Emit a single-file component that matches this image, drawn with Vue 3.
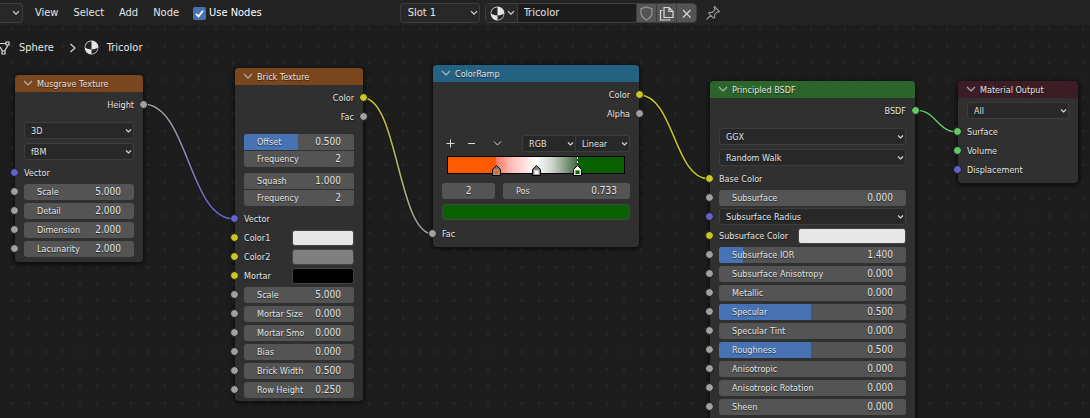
<script setup>
import { ref } from 'vue'

const colors = { y: '#c7c729', g: '#a1a1a1', p: '#6363c7', s: '#63c763' }
const useNodes = ref(true)
const material = ref('Tricolor')

const out = (label, socket) => ({ kind: 'out', label, socket })
const plain = (label, socket) => ({ kind: 'plain', label, socket })
const num = (label, value, fill = 0, socket = 'g') => ({ kind: 'num', label, value, fill, socket })
const color = (label, swatch) => ({ kind: 'color', label, swatch, socket: 'y' })
const pair = (a, b) => ({ kind: 'pair', fields: [a, b] })

const nodes = [
  { id: 'musgrave', title: 'Musgrave Texture', rows: [
    out('Height', 'g'), { kind: 'menus', label: 'Musgrave', options: ['3D', 'fBM'] }, plain('Vector', 'p'),
    num('Scale', '5.000'), num('Detail', '2.000'), num('Dimension', '2.000'), num('Lacunarity', '2.000') ] },
  { id: 'brick', title: 'Brick Texture', rows: [
    out('Color', 'y'), out('Fac', 'g'),
    pair(num('Offset', '0.500', 49), num('Frequency', '2')),
    pair(num('Squash', '1.000'), num('Frequency', '2')),
    plain('Vector', 'p'), color('Color1', '#e7e7e7'), color('Color2', '#7f7f7f'), color('Mortar', '#000000'),
    num('Scale', '5.000'), num('Mortar Size', '0.000'), num('Mortar Smo', '0.000'),
    num('Bias', '0.000'), num('Brick Width', '0.500'), num('Row Height', '0.250') ] },
  { id: 'ramp', title: 'ColorRamp', rows: [
    out('Color', 'y'), out('Alpha', 'g'), { kind: 'ramp' }, plain('Fac', 'g') ] },
  { id: 'principled', title: 'Principled BSDF', rows: [
    out('BSDF', 's'), { kind: 'menus', label: 'BSDF', options: ['GGX', 'Random Walk'] }, plain('Base Color', 'y'),
    num('Subsurface', '0.000'), { kind: 'vector', label: 'Subsurface Radius', socket: 'p' },
    color('Subsurface Color', '#e7e7e7'), num('Subsurface IOR', '1.400', 13), num('Subsurface Anisotropy', '0.000'),
    num('Metallic', '0.000'), num('Specular', '0.500', 49), num('Specular Tint', '0.000'),
    num('Roughness', '0.500', 49), num('Anisotropic', '0.000'), num('Anisotropic Rotation', '0.000'),
    num('Sheen', '0.000'), num('', '', 49) ] },
  { id: 'output', title: 'Material Output', rows: [
    { kind: 'menus', label: 'Target', options: ['All'] },
    plain('Surface', 's'), plain('Volume', 's'), plain('Displacement', 'p') ] },
]

const links = [
  { id: 'l1', from: [143, 104], to: [234, 219], a: colors.g, b: colors.p },
  { id: 'l2', from: [363, 98], to: [433, 234], a: colors.y, b: colors.g },
  { id: 'l3', from: [639, 95], to: [709, 179], a: colors.y, b: colors.y },
  { id: 'l4', from: [915, 110], to: [958, 132], a: colors.s, b: colors.s },
]
const curve = ({ from: [x1, y1], to: [x2, y2] }) => {
  const h = (x2 - x1) / 2
  return `M${x1} ${y1}C${x1 + h} ${y1} ${x2 - h} ${y2} ${x2} ${y2}`
}

const stops = [
  { at: 27.5, color: '#ff5a00' },
  { at: 50, color: '#ffffff' },
  { at: 73.3, color: '#0a5f00', active: true },
]
</script>

<template>
  <div class="editor">
    <header class="bar">
      <button class="editor-type" aria-label="Editor type">
        <svg width="8" height="6" viewBox="0 0 8 6"><path d="M1 1.2l3 3 3-3" /></svg>
      </button>
      <nav class="menu">
        <button>View</button>
        <button>Select</button>
        <button>Add</button>
        <button>Node</button>
      </nav>
      <label class="use-nodes">
        <input v-model="useNodes" type="checkbox" />
        <svg width="13" height="13" viewBox="0 0 13 13"><path d="M3 6.8l2.5 2.5L10 3.8" /></svg>
        <span>Use Nodes</span>
      </label>
      <div class="pick slot">
        <select aria-label="Slot"><option>Slot 1</option></select>
        <svg width="8" height="6" viewBox="0 0 8 6"><path d="M1 1.2l3 3 3-3" /></svg>
      </div>
      <div class="datablock">
        <button class="browse" aria-label="Browse material">
          <svg class="ball" width="15" height="15" viewBox="0 0 15 15">
            <circle cx="7.5" cy="7.5" r="6.3" /><path d="M7.5 1.2A6.3 6.3 0 0 0 1.2 7.5a9 3 0 0 0 6.3 2zM7.5 9.5a9 3 0 0 0 6.3-2A6.3 6.3 0 0 1 7.5 13.8z" />
          </svg>
          <svg width="8" height="6" viewBox="0 0 8 6"><path d="M1 1.2l3 3 3-3" /></svg>
        </button>
        <input v-model="material" aria-label="Material name" />
        <button class="tool dim" aria-label="Fake user">
          <svg width="15" height="15" viewBox="0 0 15 15"><path d="M7.5 1L13 2.8V7c0 3.2-2.5 5.2-5.5 7C4.500 12.200 2 10.200 2 7V2.800z" /></svg>
        </button>
        <button class="tool" aria-label="New material">
          <svg width="15" height="15" viewBox="0 0 15 15"><path d="M5 1.5h5l4 4v6H5zM10 1.5v4h4M3.500 4.500h-2v9.500h9v-1" /></svg>
        </button>
        <button class="tool" aria-label="Unlink">
          <svg width="15" height="15" viewBox="0 0 15 15"><path d="M4 4l7.500 7.500M11.500 4L4 11.500" /></svg>
        </button>
      </div>
      <button class="pin" aria-label="Pin">
        <svg width="16" height="16" viewBox="0 0 16 16"><path d="M9.500 1.500l5 5-1.200.6-1-.3-2.800 2.900.2 2.600-1 1-5-5 1-1 2.600.2 2.800-2.800-.9-2zM6 10l-4.500 4.500" /></svg>
      </button>
    </header>

    <main class="canvas">
      <div class="path">
        <svg width="10" height="14" viewBox="0 0 10 14"><path d="M0 2.500h6M8 4.500L4.500 10M0 6l2.500 4M6 1h3v3H6zM2 10h3v3H2z" /></svg>
        <span>Sphere</span>
        <svg width="8" height="10" viewBox="0 0 8 10"><path d="M1.500 1L6 5 1.500 9" /></svg>
        <svg class="ball" width="15" height="15" viewBox="0 0 15 15">
          <circle cx="7.5" cy="7.5" r="6.3" /><path d="M7.5 1.2A6.3 6.3 0 0 0 1.2 7.5a9 3 0 0 0 6.3 2zM7.5 9.5a9 3 0 0 0 6.3-2A6.3 6.3 0 0 1 7.5 13.8z" />
        </svg>
        <span>Tricolor</span>
      </div>
    </main>

    <svg class="links">
      <defs>
        <linearGradient v-for="l in links" :id="l.id" :key="l.id">
          <stop offset="0.2" :stop-color="l.a" /><stop offset="0.8" :stop-color="l.b" />
        </linearGradient>
      </defs>
      <g v-for="l in links" :key="l.id">
        <path class="edge" :d="curve(l)" />
        <path :d="curve(l)" :stroke="`url(#${l.id})`" />
      </g>
    </svg>

    <section v-for="n in nodes" :key="n.id" class="node" :class="n.id">
      <h2>
        <svg width="10" height="7" viewBox="0 0 10 7"><path d="M1 1l4 4 4-4" /></svg>
        <span>{{ n.title }}</span>
      </h2>
      <div class="body">
        <div v-for="(r, i) in n.rows" :key="i" class="row" :class="r.kind">
          <i v-if="r.socket" class="socket" :style="{ background: colors[r.socket] }"></i>

          <template v-if="r.kind === 'menus'">
            <div v-for="o in r.options" :key="o" class="pick">
              <select :aria-label="r.label + ' ' + o"><option>{{ o }}</option></select>
              <svg width="7" height="6" viewBox="0 0 7 6"><path d="M1 1.500l2.500 2.500L6 1.500" /></svg>
            </div>
          </template>

          <div v-else-if="r.kind === 'vector'" class="pick">
            <select :aria-label="r.label"><option>{{ r.label }}</option></select>
            <svg width="7" height="6" viewBox="0 0 7 6"><path d="M1 1.500l2.500 2.500L6 1.500" /></svg>
          </div>

          <label v-else-if="r.kind === 'num'" class="field">
            <b class="fill" :style="{ width: r.fill + '%' }"></b>
            <span>{{ r.label }}</span><input :value="r.value" />
          </label>

          <template v-else-if="r.kind === 'pair'">
            <label v-for="f in r.fields" :key="f.label" class="field">
              <b class="fill" :style="{ width: f.fill + '%' }"></b>
              <span>{{ f.label }}</span><input :value="f.value" />
            </label>
          </template>

          <template v-else-if="r.kind === 'color'">
            <span>{{ r.label }}</span>
            <button class="swatch" :aria-label="r.label" :style="{ background: r.swatch }"></button>
          </template>

          <template v-else-if="r.kind === 'ramp'">
            <div class="tools">
              <button aria-label="Add stop"><svg width="9" height="9" viewBox="0 0 9 9"><path d="M4.500 .5v8M.5 4.500h8" /></svg></button>
              <button aria-label="Delete stop"><svg width="9" height="9" viewBox="0 0 9 9"><path d="M1 4.500h7" /></svg></button>
              <button aria-label="Tools"><svg width="9" height="7" viewBox="0 0 9 7"><path d="M1 1.500l3.500 3.500L8 1.500" /></svg></button>
              <div class="modes">
                <div class="pick">
                  <select aria-label="Color mode"><option>RGB</option></select>
                  <svg width="7" height="6" viewBox="0 0 7 6"><path d="M1 1.500l2.500 2.500L6 1.500" /></svg>
                </div>
                <div class="pick">
                  <select aria-label="Interpolation"><option>Linear</option></select>
                  <svg width="7" height="6" viewBox="0 0 7 6"><path d="M1 1.500l2.500 2.500L6 1.500" /></svg>
                </div>
              </div>
            </div>
            <div class="gradient">
              <svg v-for="s in stops" :key="s.at" class="stop" :style="{ left: s.at + '%' }" width="9" height="20" viewBox="0 0 9 20">
                <path v-if="s.active" class="dash" d="M4.500 1v9" />
                <path :fill="s.active ? '#ffffff' : '#7a7a7a'" stroke="#000" d="M.5 19.500v-6l4-4 4 4v6z" />
                <path :fill="s.color" :stroke="s.active ? '#e0e0e0' : '#a0a0a0'" d="M2 14h5v4.500H2z" />
              </svg>
            </div>
            <div class="position">
              <input class="index" value="2" aria-label="Active stop" />
              <label class="field"><span>Pos</span><input value="0.733" /></label>
            </div>
            <button class="swatch wide" aria-label="Stop color"></button>
          </template>

          <span v-else>{{ r.label }}</span>
        </div>
      </div>
    </section>
  </div>
</template>

<style>
body { background: #1d1d1d; }
</style>

<style scoped>
.editor, .editor * { box-sizing: border-box; }
.editor {
  position: relative;
  display: flex;
  flex-direction: column;
  height: 100vh;
  overflow: hidden;
  color: #e5e5e5;
  font: 11px/14px "DejaVu Sans Condensed", "DejaVu Sans", sans-serif;
}
button, input, select { font: inherit; color: inherit; border: 0; background: none; padding: 0; margin: 0; min-width: 0; appearance: none; }
svg { display: block; fill: none; stroke: #d8d8d8; stroke-width: 1.2; flex: none; }
.ball circle { stroke: #e5e5e5; fill: #e5e5e5; }
.ball path { fill: #232323; stroke: none; }

.bar { display: flex; align-items: center; height: 25px; background: #232323; padding-top: 1px; }
.editor-type { width: 23px; height: 20px; border: 1px solid #3d3d3d; border-left: 0; border-radius: 0 4px 4px 0; display: flex; align-items: center; justify-content: flex-end; padding-right: 2px; background: #282828; }
.menu { display: flex; gap: 15px; margin-left: 12px; }
.use-nodes { display: flex; align-items: center; margin-left: 14px; color: #fff; }
.use-nodes input { width: 13px; height: 13px; border-radius: 2px; background: #4772b3; }
.use-nodes svg { margin-left: -13px; stroke: #fff; stroke-width: 1.8; }
.use-nodes span { margin-left: 3px; }
.pick { display: grid; align-items: center; }
.pick select { grid-area: 1 / 1; width: 100%; height: 17px; padding: 0 14px 0 6px; border: 1px solid #3d3d3d; border-radius: 3px; background: #282828; text-shadow: inherit; }
.pick svg { grid-area: 1 / 1; justify-self: end; margin-right: 2px; pointer-events: none; }
.slot { width: 80px; margin-left: 138px; }
.slot select { height: 20px; padding-left: 7px; }
.datablock { display: flex; width: 212px; height: 20px; margin-left: 5px; border: 1px solid #3d3d3d; border-radius: 4px; overflow: hidden; }
.browse { display: flex; align-items: center; gap: 2px; width: 31px; padding-left: 4px; background: #282828; }
.datablock input { flex: 1; padding-left: 6px; background: #1d1d1d; border-left: 1px solid #3d3d3d; }
.tool { width: 20px; background: #545454; border-left: 1px solid #3d3d3d; display: grid; place-items: center; }
.dim svg { stroke: #999; }
.pin { margin-left: 8px; }
.pin svg { stroke: #999; stroke-width: 1.1; }

.canvas { flex: 1; background: radial-gradient(circle at 12px 4px, #272727 1px, transparent 2px) 0 0 / 17px 17px, #1d1d1d; }
.path { display: flex; align-items: center; height: 15px; margin-top: 15px; }
.path span:nth-of-type(1) { margin: 0 15px 0 9px; }
.path .ball { margin: 0 8px 0 7px; }
.links { position: absolute; left: 0; top: 0; width: 100%; height: 100%; }
.links path { stroke-width: 1.6; }
.links .edge { stroke: #11111199; stroke-width: 3.5; }

.node { position: absolute; background: #303030; border-radius: 4px; box-shadow: 0 1px 5px 1px #000000b0; font-size: 9px; line-height: 12px; text-shadow: 0 1px 1px #0009; }
.musgrave { left: 15px; top: 75px; width: 128px; }
.brick { left: 235px; top: 68px; width: 128px; }
.ramp.node { left: 433px; top: 65px; width: 206px; }
.principled { left: 710px; top: 81px; width: 205px; }
.output { left: 958px; top: 81px; width: 120px; }
h2 { display: flex; align-items: center; gap: 4px; height: 17px; margin: 0; padding: 0 0 0 8px; border-radius: 4px 4px 0 0; background: #79461d; font: inherit; }
h2 svg { stroke: #cccc; }
.ramp h2 { background: #246283; }
.principled h2 { background: #2b652b; }
.output h2 { background: #3c1d26; }
.body { padding: 3px 9px 4px; }
.brick .body { padding-bottom: 2px; }
.row { position: relative; display: flex; align-items: center; height: 19px; white-space: nowrap; }
.row.out { justify-content: flex-end; }
.socket { position: absolute; left: -14px; top: 5px; width: 9px; height: 9px; border: 1px solid #161616; border-radius: 50%; }
.out .socket { left: auto; right: -14px; }
.row.menus { flex-direction: column; align-items: stretch; gap: 4px; height: auto; margin: 8px 0 3px; }
.output .row.menus { margin-top: 1px; }
.vector .pick { flex: 1; }
.field { position: relative; display: flex; align-items: center; flex: 1; min-width: 0; height: 16px; padding: 0 13px; background: #545454; border-radius: 3px; overflow: hidden; }
.fill { position: absolute; left: 0; top: 0; bottom: 0; background: #4772b3; }
.field span, .field input { position: relative; }
.field input { flex: 1; width: 0; text-align: right; text-shadow: inherit; font-size: 10px; }
.row.pair { flex-direction: column; align-items: stretch; gap: 1px; height: auto; margin-top: 6px; }
.out + .row.pair { margin-top: 8px; }
.pair + .plain { margin-top: 3px; }
.pair .field { flex: none; }
.pair .field:first-child { border-radius: 3px 3px 0 0; }
.pair .field:last-child { border-radius: 0 0 3px 3px; }
.color { justify-content: space-between; }
.swatch { width: 62px; height: 16px; border-radius: 3px; border: 1px solid #454545; }
.principled .swatch { width: 108px; }
.row.ramp { flex-direction: column; align-items: stretch; height: auto; margin: 12px 0 4px; }
.tools { display: flex; align-items: center; gap: 12px; padding-left: 4px; }
.tools > button svg { stroke-width: 1; }
.tools > button:nth-child(3) { margin-left: 5px; }
.modes { display: flex; width: 108px; margin-left: auto; }
.modes .pick { width: 54px; }
.modes .pick:first-child select { border-radius: 3px 0 0 3px; }
.modes .pick:last-child select { border-radius: 0 3px 3px 0; border-left: 0; }
.gradient { position: relative; height: 18px; margin: 4px 5px 0; border: 1px solid #000; background: linear-gradient(90deg, #ff5a00 27.5%, #ff7860 27.5%, #ffb8b0 35%, #ffffff 50%, #c5d0c5 60%, #466a46 73%, #0a5f00 73.3%); }
.stop { position: absolute; top: -1px; margin-left: -4px; stroke-width: 1; }
.dash { stroke: #fff; stroke-dasharray: 2 2; }
.position { display: flex; gap: 8px; margin: 9px 0 5px; }
.index { width: 53px; background: #545454; border-radius: 3px; text-align: center; font-size: 10px; text-shadow: inherit; }
.swatch.wide { width: 100%; height: 16px; background: #0a5f00; }
</style>
